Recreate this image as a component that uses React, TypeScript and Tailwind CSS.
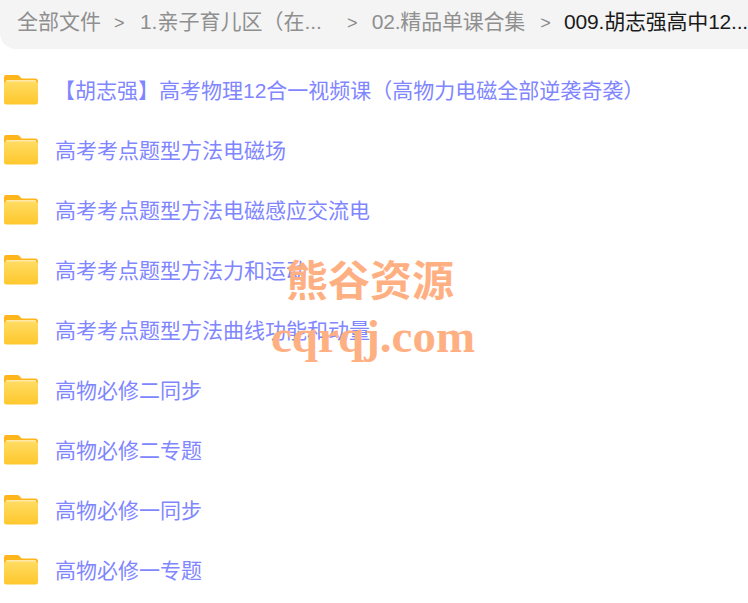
const folders = [
  "【胡志强】高考物理12合一视频课（高物力电磁全部逆袭奇袭）",
  "高考考点题型方法电磁场",
  "高考考点题型方法电磁感应交流电",
  "高考考点题型方法力和运动",
  "高考考点题型方法曲线功能和动量",
  "高物必修二同步",
  "高物必修二专题",
  "高物必修一同步",
  "高物必修一专题",
];

function FolderIcon() {
  return (
    <svg width="36" height="32" viewBox="0 0 36 32" className="shrink-0">
      <defs>
        <linearGradient id="folder-front" x1="0" y1="0" x2="0" y2="1">
          <stop offset="0" stopColor="#ffdc62" />
          <stop offset="1" stopColor="#ffc72c" />
        </linearGradient>
      </defs>
      <path
        d="M3 1h11c1.4 0 2.2.6 3 1.6l1.6 2H32a3 3 0 0 1 3 3V14H1V3a2 2 0 0 1 2-2z"
        fill="#ffb61c"
      />
      <rect x="3" y="6" width="30" height="6" rx="1" fill="#ffe9a8" />
      <rect x="1" y="7.5" width="34" height="23" rx="2.5" fill="url(#folder-front)" />
    </svg>
  );
}

function Sep() {
  return <span className="text-[18px] text-[#8a8a8a]">&gt;</span>;
}

export default function App() {
  return (
    <div className="relative h-[603px] w-[748px] overflow-hidden bg-white font-['Liberation_Sans','Noto_Sans_CJK_SC',sans-serif]">
      <div className="flex h-[49px] items-center rounded-bl-[16px] bg-[#f4f4f4] pb-[5px] pl-[17px] text-[21px] whitespace-nowrap text-[#8f8f8f]">
        <span>全部文件</span>
        <span className="ml-[13px] w-[26px]"><Sep /></span>
        <span className="w-[208px]">1.亲子育儿区（在...</span>
        <span className="w-[25px]"><Sep /></span>
        <span className="tracking-[-0.2px]">02.精品单课合集</span>
        <span className="ml-[15px] w-[24px]"><Sep /></span>
        <span className="tracking-[-0.2px] text-[#1a1a1a]">009.胡志强高中12...</span>
      </div>

      <div className="flex flex-col pt-[11px]">
        {folders.map((name, i) => (
          <div key={name} className="flex h-[60px] items-center pl-[3px]">
            <FolderIcon />
            <span className={`pt-[2px] text-[21px] whitespace-nowrap text-[#8086ff] ${i === 0 ? "ml-[15px]" : "ml-[16px]"}`}>
              {name}
            </span>
          </div>
        ))}
      </div>

      {/* watermark */}
      <div className="absolute top-[250px] left-[286px] font-['Noto_Sans_CJK_SC',serif] text-[42px] leading-[56px] font-bold whitespace-nowrap text-[#ffb083]">
        熊谷资源
      </div>
      <div className="absolute top-[310px] left-[271px] font-['Liberation_Serif',serif] text-[47px] leading-[52px] font-bold whitespace-nowrap text-[#ffb083]">
        cqrqj.com
      </div>
    </div>
  );
}
